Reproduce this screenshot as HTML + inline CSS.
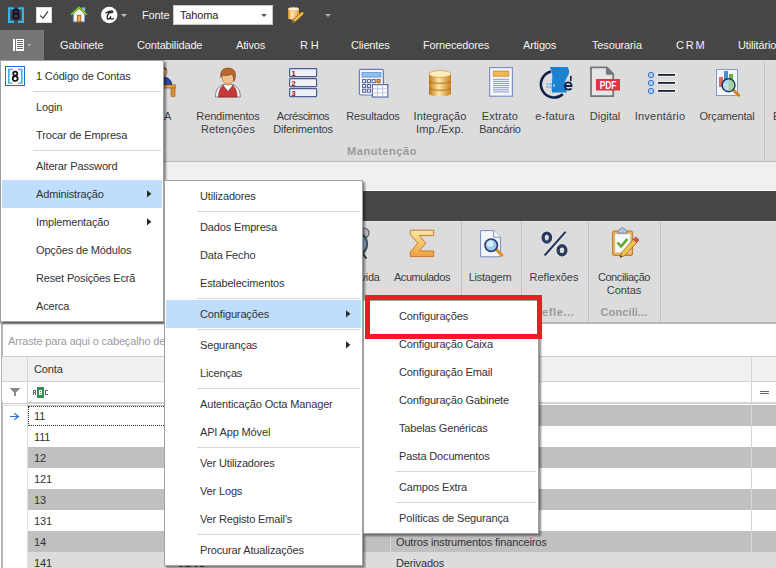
<!DOCTYPE html>
<html><head><meta charset="utf-8">
<style>
*{box-sizing:border-box}
html,body{margin:0;padding:0;width:776px;height:568px;overflow:hidden;background:#fff;font-family:"Liberation Sans",sans-serif;font-size:11px;color:#333;letter-spacing:-0.15px}
.a{position:absolute}
.t{position:absolute;white-space:nowrap;line-height:13px;font-size:11px}
#qat{left:0;top:0;width:776px;height:30px;background:#464646}
#tabs{left:0;top:30px;width:776px;height:30px;background:#464646}
.tab{position:absolute;top:39px;color:#f2f2f2;white-space:nowrap;line-height:13px}
#rib1{left:0;top:60px;width:776px;height:102px;background:#dcdcdc;border-bottom:1px solid #b9b9b9}
#strip{left:0;top:162px;width:776px;height:29px;background:#f0f0f0;border-bottom:1px solid #fafafa}
#tabs2{left:0;top:191px;width:776px;height:30px;background:#464646}
#rib2{left:0;top:221px;width:776px;height:103px;border-top:1px solid #e6e6e6;background:#dcdcdc;border-bottom:2px solid #b7b7b7}
.rl{position:absolute;white-space:nowrap;line-height:13px;color:#3c3c44;text-align:center;letter-spacing:-0.25px}
.gl{position:absolute;white-space:nowrap;line-height:13px;color:#9a9a9a;font-weight:bold;text-align:center;letter-spacing:0.6px}
.vsep{position:absolute;width:1px;background:#c4c4c4}
#grid{left:1px;top:324px;width:775px;height:244px;background:#fff;border-left:2px solid #b4b4b4}
.row{position:absolute;left:27px;width:749px;height:21px}
.g{background:#c0c0c0}
.menu{position:absolute;background:#fff;border:1px solid #a0a0a0;box-shadow:2px 2px 2px rgba(0,0,0,.45)}
.mi{position:absolute;white-space:nowrap;line-height:13px;color:#333}
.ms{position:absolute;height:1px;background:#d7d7d7}
.hl{position:absolute;background:#bfdefb}
.arr{position:absolute;width:0;height:0;border-top:3.5px solid transparent;border-bottom:3.5px solid transparent;border-left:4px solid #333}
</style></head><body>
<!-- quick access toolbar -->
<div id="qat" class="a"></div>
<div id="tabs" class="a"></div>
<div class="a" style="left:0;top:30px;width:44px;height:30px;background:#767676"></div>
<div id="rib1" class="a"></div>

<!-- QAT icons -->
<svg class="a" style="left:0;top:0" width="60" height="30" viewBox="0 0 60 30">
 <path d="M8 7.3h6v2.2h-3.8v11.3H14V23H8z M24 7.3h-6v2.2h3.8v11.3H18V23h6z" fill="#38b4ea"/>
 <ellipse cx="16" cy="11.7" rx="2.5" ry="2" fill="none" stroke="#14143a" stroke-width="2"/>
 <ellipse cx="16" cy="16.3" rx="2.9" ry="2.5" fill="none" stroke="#14143a" stroke-width="2"/>
 <rect x="36.5" y="7.5" width="15" height="15" fill="#fff" stroke="#dcdcdc" stroke-width="1"/>
 <path d="M40 15.3l3 2.8 5-6.8" stroke="#333" stroke-width="1.1" fill="none"/>
</svg>
<svg class="a" style="left:66px;top:3px" width="26" height="24" viewBox="0 0 26 24">
 <rect x="16" y="4.6" width="3" height="5" fill="#a8c0ec" stroke="#6a88c8" stroke-width=".6"/>
 <path d="M7.4 10L13 4.6l5.6 5.4v8.8H7.4z" fill="#f4f7fd" stroke="#7a98d8" stroke-width="1"/>
 <path d="M5.6 11.2L13 4.4l7.4 6.8" stroke="#5a9a1a" stroke-width="2.2" fill="none" stroke-linecap="round"/>
 <path d="M5.6 11.2L13 4.4l7.4 6.8" stroke="#a6d84a" stroke-width="1" fill="none" stroke-linecap="round"/>
 <rect x="11.4" y="12.4" width="3.4" height="6.2" fill="#f0b060" stroke="#c0601a" stroke-width="1"/>
</svg>
<svg class="a" style="left:100px;top:6px" width="18" height="18" viewBox="0 0 18 18">
 <circle cx="9.2" cy="9" r="8.2" fill="#fff"/>
 <path d="M6 7C8 5.4 11.5 4.6 12.6 5.2 13.4 5.8 12 7 10.8 6.6 M10.8 5.6C8.6 7 7 10 7.2 12.2 7.4 13.8 9.6 13.6 10.4 11.2 M10.6 10.6c-.2 1.6.2 2.6 1 2.6.8 0 1.4-.4 1.8-.8" stroke="#1e1e1e" stroke-width="1.25" fill="none" stroke-linecap="round"/>
</svg>
<div class="a" style="left:121px;top:14px;width:0;height:0;border-left:3px solid transparent;border-right:3px solid transparent;border-top:3px solid #bdbdbd"></div>
<div class="t" style="left:142px;top:9px;color:#f2f2f2">Fonte</div>
<div class="a" style="left:173px;top:5px;width:100px;height:20px;background:#fff;border:1px solid #c8c8c8"></div>
<div class="t" style="left:180px;top:9px;color:#1e1e1e">Tahoma</div>
<div class="a" style="left:261px;top:14px;width:0;height:0;border-left:3px solid transparent;border-right:3px solid transparent;border-top:3px solid #555"></div>
<svg class="a" style="left:285px;top:5px" width="20" height="20" viewBox="0 0 20 20">
 <defs><linearGradient id="gc" x1="0" x2="1"><stop offset="0" stop-color="#e08a28"/><stop offset=".35" stop-color="#fde8b8"/><stop offset="1" stop-color="#e8a040"/></linearGradient></defs>
 <path d="M3 4v9.6c0 1.4 11 1.4 11 0V4z" fill="url(#gc)"/>
 <ellipse cx="8.5" cy="4" rx="5.5" ry="1.8" fill="#fff4d8" stroke="#e0a050" stroke-width=".5"/>
 <path d="M8.6 16.4L17.2 8.4" stroke="#8a5a10" stroke-width="3.6" stroke-linecap="round"/>
 <path d="M8.6 16.4L17.2 8.4" stroke="#f6c050" stroke-width="2.4" stroke-linecap="round"/>
 <path d="M7.2 17.8l1.6-2.6 1.2 1.2z" fill="#1a2a70"/>
</svg>
<div class="a" style="left:325px;top:14px;width:0;height:0;border-left:3px solid transparent;border-right:3px solid transparent;border-top:3px solid #a8a8a8"></div>
<!-- tabs -->
<svg class="a" style="left:0;top:30px" width="44" height="30" viewBox="0 0 44 30">
 <rect x="13" y="9" width="2" height="12" fill="#fff"/>
 <rect x="16" y="9" width="8" height="12" fill="#fff"/>
 <path d="M17 10.5h6M17 12.5h6M17 14.5h6M17 16.5h6M17 18.5h6" stroke="#6a6a6a" stroke-width="1"/>
 <path d="M27.5 14.2h3.5l-1.75 1.8z" fill="#d0d0d0"/>
</svg>
<div class="tab" style="left:60px">Gabinete</div>
<div class="tab" style="left:137px">Contabilidade</div>
<div class="tab" style="left:236px">Ativos</div>
<div class="tab" style="left:300px">R H</div>
<div class="tab" style="left:351px">Clientes</div>
<div class="tab" style="left:423px">Fornecedores</div>
<div class="tab" style="left:523px">Artigos</div>
<div class="tab" style="left:592px">Tesouraria</div>
<div class="tab" style="left:676px;letter-spacing:-0.6px">C R M</div>
<div class="tab" style="left:738px">Utilitários</div>

<div id="strip" class="a"></div>
<div id="tabs2" class="a"></div>
<div id="rib2" class="a"></div>

<!-- ribbon 1 -->
<svg class="a" style="left:144px;top:66px" width="32" height="32" viewBox="0 0 32 32">
 <path d="M10 19c0-5 3-8.4 8-8.4s10 3.4 10 8.4z" fill="#2a4a9a" stroke="#1a2a6a" stroke-width=".6"/>
 <circle cx="19" cy="5.8" r="4" fill="#f0b47a" stroke="#8a5020" stroke-width=".7"/>
 <path d="M15 5c0-3 2-4 4-4s4 1 4 4c-1-1.6-2.4-2-4-2s-3 .4-4 2z" fill="#7a4418"/>
 <rect x="8" y="19" width="24" height="3" fill="#e8a448" stroke="#9a5a18" stroke-width=".7"/>
 <rect x="8.5" y="22" width="4" height="8" fill="#c88430" stroke="#9a5a18" stroke-width=".6"/>
 <rect x="27" y="22" width="4" height="8.5" fill="#d89038" stroke="#9a5a18" stroke-width=".6"/>
</svg>
<div class="rl" style="left:164px;top:110px;width:20px;text-align:left">A</div>
<svg class="a" style="left:208px;top:62px" width="40" height="40" viewBox="0 0 40 40">
 <path d="M7.5 35c0-6 2-9.5 6-11.5l12.8 0c4 2 6 5.5 6 11.5z" fill="#f4f4f4" stroke="#6a6a6a" stroke-width=".8"/>
 <path d="M10.5 35c0-5 1.5-9 4-11l10.6 0c2.5 2 4 6 4 11z" fill="#c8383a" stroke="#8a1c1e" stroke-width=".6"/>
 <path d="M14.5 22.5l5.5 7 5.5-7z" fill="#fff" stroke="#555" stroke-width=".7"/>
 <rect x="17.5" y="19" width="5" height="4.5" fill="#e8aa70"/>
 <ellipse cx="20" cy="15.5" rx="5.8" ry="6.6" fill="#f2c28e" stroke="#a8683a" stroke-width=".6"/>
 <path d="M12.8 15.5C12 9 15 6 20 6c4.5 0 7.5 2.5 7.5 7 0 2.5-.8 5-1.5 6.5-.3-3-.5-5.5-2-7.5-2.8 1.5-6.5 2-9.3 1-.7 1-1.3 2-1.9 2.5z" fill="#b8682e" stroke="#7a3a14" stroke-width=".6"/>
</svg>
<div class="rl" style="left:188px;top:110px;width:80px;letter-spacing:-0.14px">Rendimentos</div>
<div class="rl" style="left:188px;top:123px;width:80px;letter-spacing:0.18px">Retenções</div>
<svg class="a" style="left:289px;top:68px" width="29" height="30" viewBox="0 0 29 30">
 <g fill="#eef1f8" stroke="#4d5d94" stroke-width="1.2">
 <rect x="0.6" y="0.6" width="27" height="8" rx=".8"/><rect x="0.6" y="10.6" width="27" height="8" rx=".8"/><rect x="0.6" y="20.6" width="27" height="8" rx=".8"/></g>
 <g fill="#a80c0c" font-family="Liberation Sans" font-weight="bold" font-size="7.5"><text x="2.6" y="7.6">1</text><text x="2.6" y="17.6">2</text><text x="2.6" y="27.6">3</text></g>
</svg>
<div class="rl" style="left:263px;top:110px;width:80px;letter-spacing:-0.45px">Acréscimos</div>
<div class="rl" style="left:263px;top:123px;width:80px;letter-spacing:-0.17px">Diferimentos</div>
<svg class="a" style="left:352px;top:62px" width="40" height="40" viewBox="0 0 40 40">
 <rect x="7.4" y="7.4" width="24" height="25.6" rx="1.5" fill="#f4f6fc" stroke="#6a7cb8" stroke-width="1.2"/>
 <rect x="10" y="10.5" width="19" height="4.6" fill="#8cc0f0" stroke="#4a78c0" stroke-width=".6"/>
 <g fill="#fff" stroke="#5a6898" stroke-width="1.1"><rect x="10.6" y="17.6" width="3" height="3"/><rect x="15.4" y="17.6" width="3" height="3"/><rect x="20.2" y="17.6" width="3" height="3"/><rect x="10.6" y="22.4" width="3" height="3"/><rect x="15.4" y="22.4" width="3" height="3"/><rect x="10.6" y="27.2" width="3" height="3"/><rect x="15.4" y="27.2" width="3" height="3"/></g>
 <rect x="25" y="17.6" width="3" height="3" fill="#f0b050" stroke="#b06018" stroke-width="1.1"/>
 <rect x="20.4" y="22.6" width="15.4" height="12.4" fill="#fff" stroke="#5a6aa8" stroke-width="1.2"/>
 <path d="M20.4 26.8h15.4M20.4 30.9h15.4M25.5 22.6v12.4M30.7 22.6v12.4" stroke="#b8c4e0" stroke-width="1"/>
</svg>
<div class="rl" style="left:333px;top:110px;width:80px;letter-spacing:-0.16px">Resultados</div>
<svg class="a" style="left:428px;top:68.5px" width="24" height="30" viewBox="0 0 24 30">
 <defs><linearGradient id="gd" x1="0" x2="1"><stop offset="0" stop-color="#c07a18"/><stop offset=".45" stop-color="#fde7a6"/><stop offset="1" stop-color="#c8821e"/></linearGradient></defs>
 <path d="M1 5v20c0 3 22 3 22 0V5z" fill="url(#gd)"/>
 <ellipse cx="12" cy="5" rx="11" ry="3.5" fill="#fcecb8" stroke="#c8862a" stroke-width=".6"/>
 <path d="M1 12c0 3 22 3 22 0M1 19c0 3 22 3 22 0" stroke="#b8741a" stroke-width="1" fill="none"/>
</svg>
<div class="rl" style="left:400px;top:110px;width:80px;letter-spacing:0.08px">Integração</div>
<div class="rl" style="left:400px;top:123px;width:80px;letter-spacing:0.19px">Imp./Exp.</div>
<svg class="a" style="left:489px;top:67px" width="24" height="30" viewBox="0 0 24 30">
 <rect x="0.6" y="0.6" width="22.8" height="28.6" fill="#f6f8fd" stroke="#8090c4" stroke-width="1.2"/>
 <rect x="4.2" y="4" width="15.6" height="5.2" fill="#f0b850" stroke="#c88a30" stroke-width=".8"/>
 <path d="M4 12.3h16M4 14.4h16M4 16.5h16M4 18.6h16M4 20.7h16M4 22.8h16M4 24.9h16" stroke="#7080bc" stroke-width=".8"/>
</svg>
<div class="rl" style="left:460px;top:110px;width:80px;letter-spacing:0.22px">Extrato</div>
<div class="rl" style="left:460px;top:123px;width:80px;letter-spacing:-0.25px">Bancário</div>
<svg class="a" style="left:535px;top:62px" width="45" height="40" viewBox="0 0 45 40">
 <path d="M16.2 9.4A13.2 13.2 0 1 0 27.8 32.2" fill="none" stroke="#10204a" stroke-width="2.6"/>
 <path d="M15 5h17.5c1.5 2.5 2.2 4.5 1 7.5-1.2 3-3.5 5.5-4 9.5 .2 3 1.5 5.5 2.5 8.5H17c-.5-3-.3-6 0-9.5.3-4 .5-7 0-10.5z" fill="#1a82d0"/>
 <g fill="#7ab6e6"><rect x="11.5" y="21" width="2" height="2"/><rect x="14.5" y="21" width="2" height="2"/><rect x="11.5" y="24" width="2" height="2"/><rect x="14.5" y="24" width="2" height="2"/><rect x="18" y="22" width="2" height="3"/></g>
 <path d="M36.5 24h-6.5c0-2.3 1.3-3.6 3.2-3.6s3.3 1.3 3.3 3.6z M30 24c0 2.4 1.4 3.6 3.4 3.6 1.3 0 2.3-.5 3-1.3" fill="none" stroke="#10204a" stroke-width="1.9"/>
 <rect x="35" y="14" width="1.6" height="5" fill="#10204a"/>
</svg>
<div class="rl" style="left:515px;top:110px;width:80px;letter-spacing:0.20px">e-fatura</div>
<svg class="a" style="left:589px;top:66px" width="32" height="32" viewBox="0 0 32 32">
 <path d="M2 1.4h15.8l6.4 6.4v22.4H2z" fill="#e6e6e6" stroke="#777" stroke-width="1.8"/>
 <path d="M17.4 1.4v6.8h6.8z" fill="#777" stroke="#777" stroke-width="1"/>
 <rect x="7" y="13" width="24" height="11.5" fill="#de3341"/>
 <text x="19" y="22.6" text-anchor="middle" font-family="Liberation Sans" font-weight="bold" font-size="10" fill="#fff" transform="translate(19 0) scale(.85 1) translate(-19 0)">PDF</text>
</svg>
<div class="rl" style="left:565px;top:110px;width:80px;letter-spacing:-0.04px">Digital</div>
<svg class="a" style="left:646px;top:70px" width="31" height="24" viewBox="0 0 31 24">
 <g fill="#a8d0f4" stroke="#3f6fc0" stroke-width="1"><circle cx="5" cy="5" r="2.7"/><circle cx="5" cy="13" r="2.7"/><circle cx="5" cy="21" r="2.7"/></g>
 <g stroke="#f4f4f4" stroke-width="3.4" stroke-linecap="round"><path d="M12 4.8h17M12 12.8h17M12 20.8h17"/></g>
 <g stroke="#141c30" stroke-width="1.8"><path d="M12 4.8h17M12 12.8h17M12 20.8h17"/></g>
</svg>
<div class="rl" style="left:620px;top:110px;width:80px;letter-spacing:0.23px">Inventário</div>
<svg class="a" style="left:715px;top:68px" width="28" height="30" viewBox="0 0 28 30">
 <rect x="1.5" y="1.5" width="21" height="26" fill="#f5f7fd" stroke="#8898c8"/>
 <rect x="4" y="9" width="4" height="10" fill="#e06a5a"/><rect x="9" y="3" width="4" height="12" fill="#4a90d0"/><rect x="14" y="6" width="4" height="11" fill="#6ab04a"/>
 <path d="M18.6 22.4l5 4.8" stroke="#d8861e" stroke-width="3" stroke-linecap="round"/>
 <circle cx="13.5" cy="17.2" r="6.4" fill="#b8dcf4" fill-opacity=".92" stroke="#1e3a6a" stroke-width="1.6"/>
 <path d="M13.5 11.4v11.6a5.8 5.8 0 0 0 0-11.6z" fill="#9ccf8a" fill-opacity=".8"/>
</svg>
<div class="rl" style="left:687px;top:110px;width:80px;letter-spacing:-0.17px">Orçamental</div>
<div class="vsep" style="left:764px;top:62px;height:98px"></div>
<div class="rl" style="left:773px;top:110px;width:20px;text-align:left">E</div>
<div class="gl" style="left:332px;top:145px;width:100px">Manutenção</div>
<!-- ribbon 2 -->
<svg class="a" style="left:338px;top:226px" width="34" height="34" viewBox="0 0 34 34">
 <circle cx="8" cy="7" r="5" fill="#b8bcc4" stroke="#5a5e66" stroke-width="1.2"/>
 <circle cx="26" cy="7" r="5" fill="#b8bcc4" stroke="#5a5e66" stroke-width="1.2"/>
 <path d="M9 28l-3 4M25 28l3 4" stroke="#3a3e46" stroke-width="2" stroke-linecap="round"/>
 <circle cx="17" cy="18" r="12" fill="#8cc0e8" stroke="#4a5058" stroke-width="2.2"/>
 <path d="M17 10v8h8" stroke="#2a3a4a" stroke-width="1.2" fill="none"/>
</svg>
<div class="rl" style="left:350px;top:271px;width:40px;text-align:left">Dívida</div>
<svg class="a" style="left:400px;top:222px" width="40" height="40" viewBox="0 0 40 40">
 <defs><linearGradient id="gs" x1="0" y1="0" x2="0" y2="1"><stop offset="0" stop-color="#fde7a8"/><stop offset=".5" stop-color="#f6c66a"/><stop offset="1" stop-color="#eea040"/></linearGradient></defs>
 <path d="M10.3 8.2h23.4v5.4H19.4l6.4 7.6-6.4 7.8h14.3v5.6H10.3v-4.6l7.6-8.8-7.6-8.6z" fill="url(#gs)" stroke="#c8782a" stroke-width="1" stroke-linejoin="round"/>
</svg>
<div class="rl" style="left:382px;top:271px;width:80px;letter-spacing:-0.45px">Acumulados</div>
<div class="vsep" style="left:461px;top:221px;height:101px"></div>
<svg class="a" style="left:478px;top:228px" width="28" height="32" viewBox="0 0 28 32">
 <path d="M2.6 2.6h13.2l6.6 6.6v19.6H2.6z" fill="#f2f5fc" stroke="#7a8cc4" stroke-width="1"/>
 <path d="M15.8 2.6v6.6h6.6" fill="#fff" stroke="#7a8cc4" stroke-width="1"/>
 <path d="M18.5 21.5l5.2 5.6" stroke="#e0922a" stroke-width="3.2" stroke-linecap="round"/>
 <circle cx="13.2" cy="17.2" r="6.2" fill="#9ccaf0" stroke="#2a3c6a" stroke-width="1.6"/>
 <circle cx="12.2" cy="15.8" r="3.2" fill="#d6ecfc"/>
</svg>
<div class="rl" style="left:450px;top:271px;width:80px;letter-spacing:-0.25px">Listagem</div>
<div class="vsep" style="left:521px;top:221px;height:101px"></div>
<svg class="a" style="left:535px;top:222px" width="40" height="40" viewBox="0 0 40 40">
 <g fill="none" stroke="#fff" stroke-opacity=".6" stroke-width="4.4"><ellipse cx="11.8" cy="15.6" rx="4" ry="4.6"/><ellipse cx="27" cy="28.2" rx="4.2" ry="4.6"/><path d="M30.6 9.8L9.6 33.6"/></g>
 <g fill="none" stroke="#2b3a60"><ellipse cx="11.8" cy="15.6" rx="3.7" ry="4.5" stroke-width="3.4"/><ellipse cx="27" cy="28.2" rx="3.9" ry="4.5" stroke-width="3.4"/><path d="M30.6 9.8L9.6 33.6" stroke-width="2.2"/></g>
</svg>
<div class="rl" style="left:514px;top:271px;width:80px;letter-spacing:0.01px">Reflexões</div>
<div class="gl" style="left:514px;top:306px;width:80px">Refle...</div>
<div class="vsep" style="left:588px;top:221px;height:101px"></div>
<svg class="a" style="left:605px;top:222px" width="40" height="40" viewBox="0 0 40 40">
 <rect x="7.6" y="9" width="20" height="24.4" rx="1.5" fill="#eeb050" stroke="#b8782a" stroke-width="1"/>
 <rect x="10" y="12" width="15.2" height="18.5" fill="#f6f8fc" stroke="#c8d0e0" stroke-width=".6"/>
 <path d="M13 9.5c0-2 1.5-2.2 2.6-2.2 0-1 .8-1.6 1.8-1.6s1.8.6 1.8 1.6c1.1 0 2.6.2 2.6 2.2v1.6H13z" fill="#b8c4dc" stroke="#6a78a0" stroke-width=".8"/>
 <path d="M12.5 20.5l3.6 4 6.2-7.5" stroke="#5aaa2a" stroke-width="2.6" fill="none" stroke-linejoin="round"/>
 <path d="M15 35.4l1.8-5 11.6-13 3.4 3-11.6 13z" fill="#f4c050" stroke="#9a6a20" stroke-width=".8"/>
 <path d="M28.4 17.4l2.2-2.4 3.4 3-2.2 2.4z" fill="#e05858" stroke="#9a3030" stroke-width=".7"/>
 <path d="M15 35.4l.8-2.3 1.6 1.4z" fill="#2a3050"/>
</svg>
<div class="rl" style="left:584px;top:271px;width:80px;letter-spacing:-0.43px">Conciliação</div>
<div class="rl" style="left:584px;top:284px;width:80px;letter-spacing:-0.08px">Contas</div>
<div class="gl" style="left:584px;top:306px;width:80px;letter-spacing:0.1px">Concili...</div>
<div class="vsep" style="left:660px;top:221px;height:101px"></div>
<div id="grid" class="a"></div>

<!-- grid -->
<div class="t" style="left:8px;top:335px;color:#9b9ba3">Arraste para aqui o cabeçalho de uma coluna para agrupar por essa coluna</div>
<div class="a" style="left:2px;top:356px;width:774px;height:26px;background:#f1f1f1;border-top:1px solid #cdcdcd;border-bottom:1px solid #d4d4d4"></div>
<div class="t" style="left:34px;top:363px;color:#333">Conta</div>
<div class="a" style="left:2px;top:382px;width:774px;height:20px;background:#fff"></div>
<div class="a" style="left:28px;top:402px;width:748px;height:2px;background:#d2d2d2"></div>
<div class="a" style="left:2px;top:403px;width:25px;height:1px;background:#cdcdcd"></div>
<div class="a" style="left:2px;top:405px;width:25px;height:1px;background:#dcdcdc"></div>
<div class="a" style="left:27px;top:357px;width:1px;height:48px;background:#d4d4d4"></div>
<div class="a" style="left:751px;top:357px;width:1px;height:211px;background:#d4d4d4"></div>
<svg class="a" style="left:0;top:380px" width="60" height="22" viewBox="0 0 60 22" shape-rendering="crispEdges">
 <path d="M10 8h10v1h-1v1h-1v1h-1v1h-1v4h-2v-4h-1v-1h-1v-1h-1v-1h-1z" fill="#8a8a8a"/>
 <rect x="37" y="7" width="7" height="11" fill="#2e9150"/>
 <g fill="#fff"><rect x="39" y="10" width="3" height="1"/><rect x="39" y="12" width="3" height="1"/><rect x="39" y="14" width="3" height="1"/><rect x="39" y="10" width="1" height="5"/><rect x="41" y="10" width="1" height="5"/></g>
 <g fill="#666"><rect x="33" y="10" width="1" height="5"/><rect x="35" y="10" width="1" height="5"/><rect x="33" y="10" width="3" height="1"/><rect x="33" y="12" width="3" height="1"/>
 <rect x="45" y="10" width="1" height="5"/><rect x="45" y="10" width="3" height="1"/><rect x="45" y="14" width="3" height="1"/></g>
</svg>
<div class="a" style="left:760px;top:391px;width:9px;height:1px;background:#6a6a6a"></div>
<div class="a" style="left:760px;top:393px;width:9px;height:1px;background:#6a6a6a"></div>
<!-- data rows -->
<div class="row g" style="top:405px"></div>
<div class="row" style="top:426px"></div>
<div class="row g" style="top:447px"></div>
<div class="row" style="top:468px"></div>
<div class="row g" style="top:489px"></div>
<div class="row" style="top:510px"></div>
<div class="row g" style="top:531px"></div>
<div class="row" style="top:552px;background:#dcdcdc"></div>
<div class="a" style="left:27px;top:405px;width:1px;height:163px;background:#e0e0e0"></div>
<div class="a" style="left:390px;top:405px;width:1px;height:163px;background:#d8d8d8"></div>
<div class="a" style="left:751px;top:405px;width:1px;height:163px;background:#d8d8d8"></div>
<div class="a" style="left:28px;top:406px;width:140px;height:20px;background:#fff;border:1px dotted #333"></div>
<svg class="a" style="left:9px;top:412px" width="12" height="10" viewBox="0 0 12 10"><path d="M1 4.5h9.2M5.3 1.2l4.3 3.3-4.3 3.3" stroke="#2a6fd6" stroke-width="1.1" fill="none"/></svg>
<div class="t" style="left:34px;top:410px">11</div>
<div class="t" style="left:34px;top:431px">111</div>
<div class="t" style="left:34px;top:452px">12</div>
<div class="t" style="left:34px;top:473px">121</div>
<div class="t" style="left:34px;top:494px">13</div>
<div class="t" style="left:34px;top:515px">131</div>
<div class="t" style="left:34px;top:536px">14</div>
<div class="t" style="left:34px;top:557px">141</div>
<div class="t" style="left:396px;top:536px">Outros instrumentos financeiros</div>
<div class="t" style="left:396px;top:557px">Derivados</div>
<div class="t" style="left:178px;top:557px">01/01</div>

<!-- menu 1 -->
<div class="menu" style="left:0;top:60px;width:164px;height:262px"></div>
<svg class="a" style="left:5px;top:66px" width="20" height="20" viewBox="0 0 20 20">
 <rect x="0.5" y="0.5" width="19" height="19" fill="#fff" stroke="#1f6fd8" stroke-width="1"/>
 <path d="M3 2.8h4.6v1.4H4.6v12.2h3v1.4H3z M17.6 2.8H13v1.4h3v12.2h-3v1.4h4.6z" fill="#3ab2e2"/>
 <ellipse cx="10.2" cy="7.6" rx="2.1" ry="1.9" fill="none" stroke="#111" stroke-width="1.7"/>
 <ellipse cx="10.2" cy="12.6" rx="2.5" ry="2.4" fill="none" stroke="#111" stroke-width="1.7"/>
</svg>
<div class="mi" style="left:36px;top:70px">1 Código de Contas</div>
<div class="ms" style="left:33px;top:91px;width:128px"></div>
<div class="mi" style="left:36px;top:101px">Login</div>
<div class="mi" style="left:36px;top:129px">Trocar de Empresa</div>
<div class="ms" style="left:33px;top:150px;width:128px"></div>
<div class="mi" style="left:36px;top:160px">Alterar Password</div>
<div class="hl" style="left:2px;top:180px;width:160px;height:28px"></div>
<div class="mi" style="left:36px;top:188px">Administração</div>
<svg class="a" style="left:147px;top:190px" width="5" height="8" viewBox="0 0 5 8"><path d="M0 0.2L4.4 3.8 0 7.4z" fill="#2a2a2a"/></svg>
<div class="mi" style="left:36px;top:216px">Implementação</div>
<svg class="a" style="left:147px;top:218px" width="5" height="8" viewBox="0 0 5 8"><path d="M0 0.2L4.4 3.8 0 7.4z" fill="#2a2a2a"/></svg>
<div class="mi" style="left:36px;top:244px">Opções de Módulos</div>
<div class="mi" style="left:36px;top:272px">Reset Posições Ecrã</div>
<div class="mi" style="left:36px;top:300px">Acerca</div>
<!-- menu 2 -->
<div class="menu" style="left:164px;top:180px;width:199px;height:386px"></div>
<div class="mi" style="left:200px;top:190px">Utilizadores</div>
<div class="ms" style="left:197px;top:211px;width:163px"></div>
<div class="mi" style="left:200px;top:221px">Dados Empresa</div>
<div class="mi" style="left:200px;top:249px">Data Fecho</div>
<div class="mi" style="left:200px;top:277px">Estabelecimentos</div>
<div class="ms" style="left:197px;top:298px;width:163px"></div>
<div class="hl" style="left:166px;top:300px;width:195px;height:28px"></div>
<div class="mi" style="left:200px;top:308px">Configurações</div>
<svg class="a" style="left:346px;top:310px" width="5" height="8" viewBox="0 0 5 8"><path d="M0 0.2L4.4 3.8 0 7.4z" fill="#2a2a2a"/></svg>
<div class="ms" style="left:197px;top:329px;width:163px"></div>
<div class="mi" style="left:200px;top:339px">Seguranças</div>
<svg class="a" style="left:346px;top:341px" width="5" height="8" viewBox="0 0 5 8"><path d="M0 0.2L4.4 3.8 0 7.4z" fill="#2a2a2a"/></svg>
<div class="mi" style="left:200px;top:367px">Licenças</div>
<div class="ms" style="left:197px;top:388px;width:163px"></div>
<div class="mi" style="left:200px;top:398px">Autenticação Octa Manager</div>
<div class="mi" style="left:200px;top:426px">API App Móvel</div>
<div class="ms" style="left:197px;top:447px;width:163px"></div>
<div class="mi" style="left:200px;top:457px">Ver Utilizadores</div>
<div class="mi" style="left:200px;top:485px">Ver Logs</div>
<div class="mi" style="left:200px;top:513px">Ver Registo Email's</div>
<div class="ms" style="left:197px;top:534px;width:163px"></div>
<div class="mi" style="left:200px;top:544px">Procurar Atualizações</div>
<!-- menu 3 -->
<div class="menu" style="left:363px;top:300px;width:176px;height:234px"></div>
<div class="mi" style="left:399px;top:310px">Configurações</div>
<div class="mi" style="left:399px;top:338px">Configuração Caixa</div>
<div class="mi" style="left:399px;top:366px">Configuração Email</div>
<div class="mi" style="left:399px;top:394px">Configuração Gabinete</div>
<div class="mi" style="left:399px;top:422px">Tabelas Genéricas</div>
<div class="mi" style="left:399px;top:450px">Pasta Documentos</div>
<div class="ms" style="left:396px;top:471px;width:140px"></div>
<div class="mi" style="left:399px;top:481px">Campos Extra</div>
<div class="ms" style="left:396px;top:502px;width:140px"></div>
<div class="mi" style="left:399px;top:512px">Políticas de Segurança</div>
<!-- red highlight box -->
<div class="a" style="left:365px;top:295px;width:177px;height:44px;border:5px solid #ed1c24"></div>
</body></html>
